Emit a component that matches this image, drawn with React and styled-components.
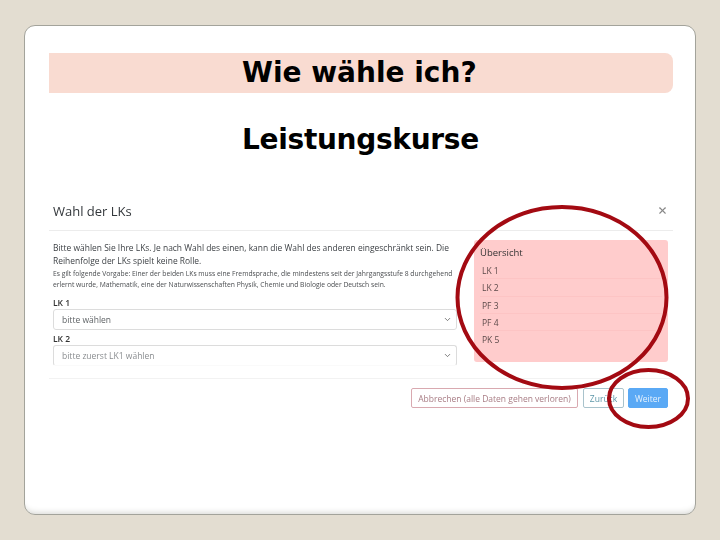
import React from 'react'
import styled, { createGlobalStyle } from 'styled-components'
import { ChevronDown, X } from 'lucide-react'

const GlobalStyle = createGlobalStyle`
  html, body {
    margin: 0;
    padding: 0;
    background: #e3ddd1;
  }
`

function Field({ label, value, muted }) {
  return (
    <FieldWrap>
      <FieldLabel>{label}</FieldLabel>
      <SelectBox muted={muted}>
        <span>{value}</span>
        <ChevronDown size={9} strokeWidth={2} color="#555" />
      </SelectBox>
    </FieldWrap>
  )
}

function App() {
  return (
    <Page>
      <GlobalStyle />
      <Slide>
        <TitleBar>
          <Title>Wie wähle ich?</Title>
        </TitleBar>
        <Subtitle>Leistungskurse</Subtitle>

        <Modal>
          <ModalHeader>
            <ModalTitle>Wahl der LKs</ModalTitle>
            <CloseIcon><X size={11} strokeWidth={2.4} /></CloseIcon>
          </ModalHeader>
          <ModalBody>
            <LeftColumn>
              <Intro>
                Bitte wählen Sie Ihre LKs. Je nach Wahl des einen, kann die Wahl des anderen eingeschränkt sein. Die Reihenfolge der LKs spielt keine Rolle.
              </Intro>
              <SmallPrint>
                Es gilt folgende Vorgabe: Einer der beiden LKs muss eine Fremdsprache, die mindestens seit der Jahrgangsstufe 8 durchgehend erlernt wurde, Mathematik, eine der Naturwissenschaften Physik, Chemie und Biologie oder Deutsch sein.
              </SmallPrint>
              <Field label="LK 1" value="bitte wählen" />
              <Field label="LK 2" value="bitte zuerst LK1 wählen" muted />
            </LeftColumn>
            <Overview>
              <OverviewTitle>Übersicht</OverviewTitle>
              {['LK 1', 'LK 2', 'PF 3', 'PF 4', 'PK 5'].map((row) => (
                <OverviewRow key={row}>{row}</OverviewRow>
              ))}
            </Overview>
          </ModalBody>
          <ModalFooter>
            <CancelButton>Abbrechen (alle Daten gehen verloren)</CancelButton>
            <BackButton>Zurück</BackButton>
            <NextButton>Weiter</NextButton>
          </ModalFooter>
        </Modal>

        <Marks viewBox="0 0 720 540">
          <ellipse cx="562" cy="297.5" rx="104.5" ry="90.5" />
          <ellipse cx="648.5" cy="398.5" rx="39.5" ry="28.5" />
        </Marks>
      </Slide>
    </Page>
  )
}

export default App

const Page = styled.div`
  width: 720px;
  height: 540px;
  box-sizing: border-box;
  padding: 25px 24px 25px;
  background: #e3ddd1;
  overflow: hidden;
`

const Slide = styled.div`
  height: 490px;
  box-sizing: border-box;
  padding: 27px 22px 0 24px;
  background: #fff;
  border: 1px solid #a3a39b;
  border-radius: 11px;
  box-shadow: inset 0 -6px 6px -5px #d4d4d0;
  display: flex;
  flex-direction: column;
`

const TitleBar = styled.div`
  height: 40px;
  background: #f9dbd1;
  border-radius: 0 8px 8px 0;
  padding-left: 193px;
  display: flex;
  align-items: center;
`

const Title = styled.h1`
  margin: 0;
  font: bold 28px/1 "DejaVu Sans", sans-serif;
  color: #000;
  white-space: nowrap;
`

const Subtitle = styled(Title)`
  margin: 33px 0 0 193px;
  letter-spacing: -0.3px;
`

const Modal = styled.div`
  margin-top: 38px;
  padding: 0 5px 0 4px;
  filter: blur(0.4px);
  font-family: "Open Sans", sans-serif;
  color: #3b3f43;
`

const ModalHeader = styled.div`
  height: 38px;
  margin: 0 -5px 0 -4px;
  padding: 0 5px 0 4px;
  border-bottom: 1px solid #ececec;
  display: flex;
  align-items: center;
  justify-content: space-between;
`

const ModalTitle = styled.div`
  font-size: 13px;
  font-weight: 500;
  color: #33373b;
`

const CloseIcon = styled.div`
  display: flex;
  color: #888;
  margin-top: -2px;
`

const ModalBody = styled.div`
  display: flex;
  justify-content: space-between;
  height: 138px;
  margin: 0 -5px 0 -4px;
  padding: 9px 5px 0 4px;
  border-bottom: 1px solid #f2f2f2;
`

const LeftColumn = styled.div`
  width: 404px;
`

const Intro = styled.div`
  font-size: 8.45px;
  line-height: 13px;
  margin-top: 1px;
`

const SmallPrint = styled.div`
  font-size: 6.75px;
  line-height: 11px;
  color: #4a4d50;
  margin-top: 1px;
`

const FieldWrap = styled.div`
  margin-top: 7px;

  & + & {
    margin-top: 3px;
  }
`

const FieldLabel = styled.div`
  font-size: 8.5px;
  line-height: 11px;
  font-weight: 600;
  color: #333;
  margin-bottom: 1px;
`

const SelectBox = styled.div`
  height: 21px;
  box-sizing: border-box;
  padding: 0 4px 0 8px;
  border: 1px solid #dcdcdc;
  border-bottom-color: ${(p) => (p.muted ? '#fafafa' : '#dcdcdc')};
  border-radius: 3px;
  display: flex;
  align-items: center;
  justify-content: space-between;
  font-size: 8.5px;
  color: ${(p) => (p.muted ? '#8a8d90' : '#5f6366')};
`

const Overview = styled.div`
  width: 194px;
  height: 122px;
  box-sizing: border-box;
  padding: 6px 6px 0;
  background: #ffcccc;
  border-radius: 3px;
`

const OverviewTitle = styled.div`
  font-size: 9.5px;
  line-height: 13px;
  font-weight: 500;
  color: #333;
  margin-bottom: 3px;
`

const OverviewRow = styled.div`
  height: 17.3px;
  box-sizing: border-box;
  padding-left: 2px;
  border-bottom: 1px solid #fdc4c4;
  font-size: 8.5px;
  line-height: 17px;
  color: #5c4a4a;

  &:last-child {
    border-bottom: none;
  }
`

const ModalFooter = styled.div`
  display: flex;
  justify-content: flex-end;
  gap: 4px;
  margin-top: 9px;
`

const FooterButton = styled.div`
  height: 20px;
  box-sizing: border-box;
  border-radius: 2px;
  border: 1px solid;
  display: flex;
  align-items: center;
  justify-content: center;
  font-size: 8.5px;
  white-space: nowrap;
`

const CancelButton = styled(FooterButton)`
  width: 167px;
  margin-right: 1px;
  border-color: #d9a9b0;
  color: #a87c84;
`

const BackButton = styled(FooterButton)`
  width: 41px;
  border-color: #a9c3cc;
  color: #5c96a8;
`

const NextButton = styled(FooterButton)`
  width: 40px;
  border-color: #5aa9f5;
  background: #5aa9f5;
  color: #e6f2fd;
`

const Marks = styled.svg`
  position: absolute;
  top: 0;
  left: 0;
  width: 720px;
  height: 540px;
  pointer-events: none;

  ellipse {
    fill: none;
    stroke: #a30a12;
    stroke-width: 4;
  }
`
